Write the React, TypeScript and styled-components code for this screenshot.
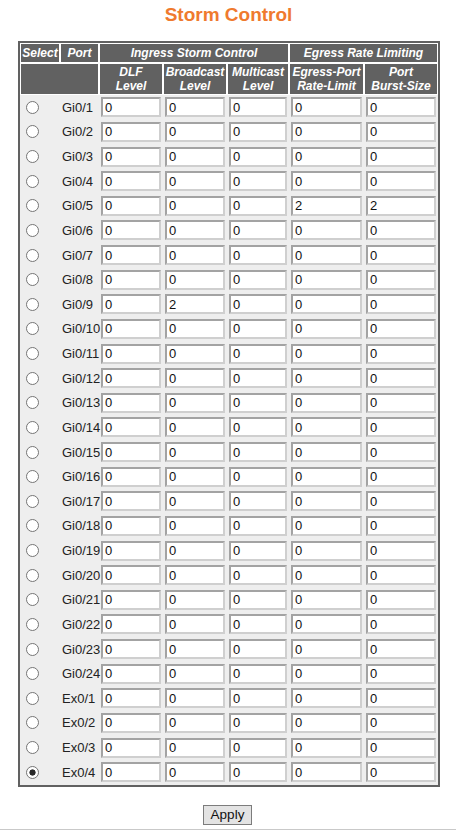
import React, { useState } from "react";
import styled, { createGlobalStyle } from "styled-components";

const Global = createGlobalStyle`
  html, body { margin: 0; padding: 0; background: #fff; }
  body { font-family: "Liberation Sans", Arial, sans-serif; color: #222; }
`;

const Page = styled.div`
  width: 456px;
  display: flex;
  flex-direction: column;
`;

const Title = styled.h1`
  margin: 0;
  padding-top: 4px;
  padding-left: 1px;
  line-height: 22px;
  text-align: center;
  font-size: 19px;
  font-weight: bold;
  color: #ef7a2e;
  box-sizing: border-box;
  height: 41px;
`;

const Table = styled.table`
  margin-left: 18px;
  width: 422px;
  table-layout: fixed;
  border-collapse: separate;
  border-spacing: 0;
  border: 2px solid #616161;
  background: #eeeeee;
`;

const Th = styled.th<{ $tall?: boolean }>`
  background: #616161;
  color: #fff;
  border: 1px solid #fff;
  font-size: 12px;
  font-style: italic;
  font-weight: bold;
  line-height: 14px;
  padding: 0;
  text-align: center;
  height: ${(p) => (p.$tall ? "30px" : "18px")};
  box-sizing: content-box;
  white-space: nowrap;
  overflow: hidden;
`;

const Row = styled.tr`
  height: 24.64px;
`;

const SelectCell = styled.td`
  padding: 0 0 0 6px;
  vertical-align: middle;
`;

const PortCell = styled.td`
  padding: 0 0 0 2px;
  font-size: 13px;
  white-space: nowrap;
  color: #222;
`;

const InputCell = styled.td`
  padding: 0 2px;
`;

const Radio = styled.input.attrs({ type: "radio" })`
  appearance: none;
  display: block;
  margin: 0;
  width: 13px;
  height: 13px;
  border-radius: 50%;
  border: 1.5px solid #757575;
  background: #fff;
  box-sizing: border-box;
  &:checked {
    background: radial-gradient(circle, #2a2a2a 0 2.8px, #fff 3.4px);
  }
`;

const Field = styled.input`
  display: block;
  box-sizing: border-box;
  width: 100%;
  height: 20px;
  margin: 0;
  padding: 0 2px;
  font-family: "Liberation Sans", Arial, sans-serif;
  font-size: 13px;
  color: #111;
  background: #fff;
  border-width: 2px;
  border-style: solid;
  border-color: #a3a3a3 #cfcfcf #cfcfcf #a3a3a3;
  outline: none;
`;

const Footer = styled.div`
  display: flex;
  justify-content: center;
  padding-top: 18px;
  padding-bottom: 4px;
  border-bottom: 1px solid #c9c9c9;
`;

const ApplyButton = styled.button`
  width: 49px;
  height: 20px;
  padding: 0;
  margin-left: -1px;
  font-family: "Liberation Sans", Arial, sans-serif;
  font-size: 13.5px;
  color: #111;
  background: #e3e3e3;
  border: 1px solid #7c7c7c;
  border-radius: 0;
`;

type PortRow = { name: string; vals: string[] };

const ports: PortRow[] = [
  ...Array.from({ length: 24 }, (_, i) => ({
    name: `Gi0/${i + 1}`,
    vals: ["0", "0", "0", "0", "0"],
  })),
  ...Array.from({ length: 4 }, (_, i) => ({
    name: `Ex0/${i + 1}`,
    vals: ["0", "0", "0", "0", "0"],
  })),
];
ports[4].vals = ["0", "0", "0", "2", "2"];
ports[8].vals = ["0", "2", "0", "0", "0"];

const colWidths = [40, 39, 64, 64, 62, 75, 74];

export default function App() {
  const [selected, setSelected] = useState("Ex0/4");
  return (
    <Page>
      <Global />
      <Title>Storm Control</Title>
      <Table>
        <colgroup>
          {colWidths.map((w, i) => (
            <col key={i} style={{ width: w }} />
          ))}
        </colgroup>
        <thead>
          <tr>
            <Th>Select</Th>
            <Th>Port</Th>
            <Th colSpan={3}>Ingress Storm Control</Th>
            <Th colSpan={2}>Egress Rate Limiting</Th>
          </tr>
          <tr>
            <Th $tall colSpan={2}></Th>
            <Th $tall>
              DLF
              <br />
              Level
            </Th>
            <Th $tall>
              Broadcast
              <br />
              Level
            </Th>
            <Th $tall>
              Multicast
              <br />
              Level
            </Th>
            <Th $tall>
              Egress-Port
              <br />
              Rate-Limit
            </Th>
            <Th $tall>
              Port
              <br />
              Burst-Size
            </Th>
          </tr>
        </thead>
        <tbody>
          {ports.map((p) => (
            <Row key={p.name}>
              <SelectCell>
                <Radio
                  name="sel"
                  checked={selected === p.name}
                  onChange={() => setSelected(p.name)}
                />
              </SelectCell>
              <PortCell>{p.name}</PortCell>
              {p.vals.map((v, i) => (
                <InputCell key={i}>
                  <Field defaultValue={v} />
                </InputCell>
              ))}
            </Row>
          ))}
        </tbody>
      </Table>
      <Footer>
        <ApplyButton>Apply</ApplyButton>
      </Footer>
    </Page>
  );
}
